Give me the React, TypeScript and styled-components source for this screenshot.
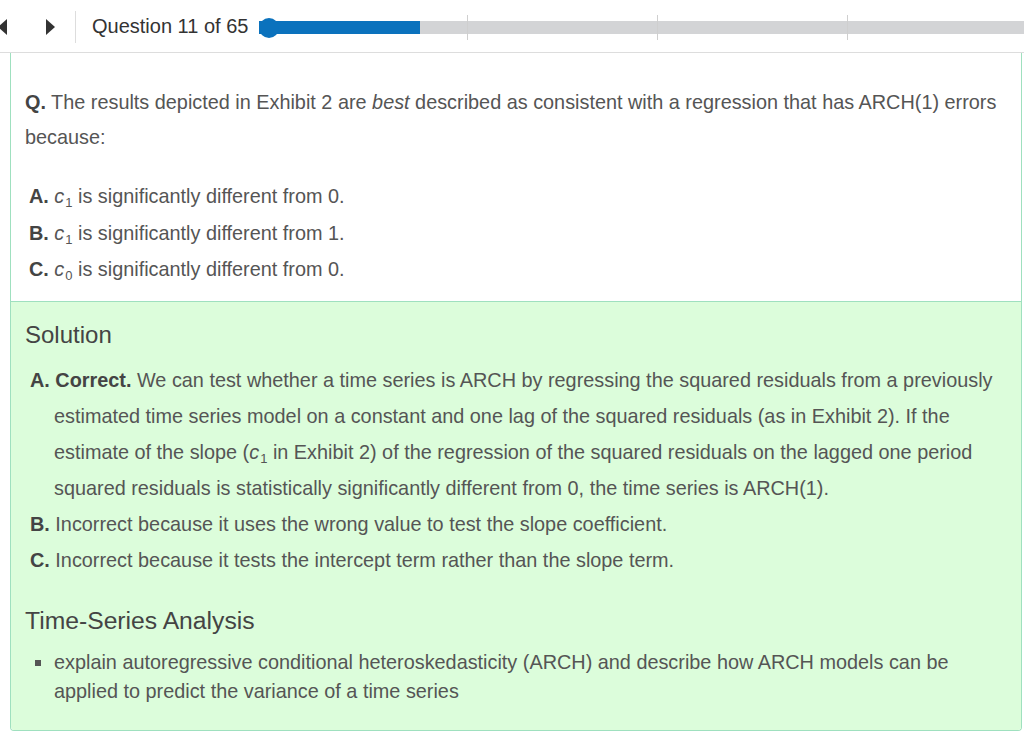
import React from "react";
import styled, { createGlobalStyle } from "styled-components";

const Global = createGlobalStyle`
  html, body { margin: 0; padding: 0; background: #ffffff; }
  body { font-family: "Liberation Sans", Arial, sans-serif; color: #555555; }
  * { box-sizing: border-box; }
`;

const Header = styled.header`
  display: flex;
  align-items: center;
  height: 53px;
  border-bottom: 1px solid #dddddd;
  overflow: hidden;
`;

const Arrow = styled.button<{ $dir: "left" | "right"; $offset: number }>`
  width: 0;
  height: 0;
  padding: 0;
  margin: 1px 0 0 ${(p) => p.$offset}px;
  background: none;
  border-style: solid;
  border-color: transparent;
  border-width: 8.5px 0 8.5px 0;
  ${(p) =>
    p.$dir === "left"
      ? "border-right: 9px solid #333333;"
      : "border-left: 9px solid #333333;"}
  flex: none;
  cursor: pointer;
`;

const Divider = styled.div`
  width: 1px;
  height: 32px;
  background: #dddddd;
  margin: 1px 0 0 20px;
  flex: none;
`;

const Title = styled.div`
  margin-left: 16px;
  font-size: 20px;
  color: #333333;
  white-space: nowrap;
  flex: none;
`;

const Progress = styled.div`
  position: relative;
  flex: 1;
  margin-left: 11px;
  margin-top: 3px;
  height: 24px;
  display: flex;
  align-items: center;
`;

const Track = styled.div`
  flex: 1;
  height: 13px;
  background: #d3d4d6;
  display: flex;
`;

const Fill = styled.div`
  height: 100%;
  background: #0b72bd;
`;

const Thumb = styled.div`
  position: absolute;
  left: 0;
  top: 2px;
  width: 20px;
  height: 20px;
  border-radius: 50%;
  background: #0b72bd;
`;

const Tick = styled.div`
  position: absolute;
  top: -1px;
  width: 1px;
  height: 25px;
  background: #cfcfcf;
`;

const Card = styled.main`
  margin: 0 2px 0 10px;
  border: 1px solid #9fe0bf;
  border-top: none;
  border-radius: 0 0 4px 4px;
  overflow: hidden;
`;

const QuestionSection = styled.section`
  padding: 32px 14px 13px 14px;
  background: #ffffff;
`;

const QuestionText = styled.p`
  margin: 0 0 23px 0;
  font-size: 19.85px;
  line-height: 35px;
  color: #555555;
  b { color: #444444; }
`;

const OptionList = styled.div`
  display: flex;
  flex-direction: column;
  padding-left: 4px;
`;

const Option = styled.div`
  font-size: 19.85px;
  line-height: 36.5px;
  color: #555555;
  b { color: #444444; }
`;

const Var = styled.span`
  font-style: italic;
  sub {
    font-style: normal;
    font-size: 13px;
    vertical-align: -4px;
    line-height: 0;
    margin-left: 1px;
  }
`;

const SolutionSection = styled.section`
  background: #dcfddb;
  border-top: 1px solid #9fe0bf;
  padding: 16px 14px 24px 14px;
`;

const Heading = styled.h2<{ $size?: number; $gap?: number }>`
  margin: ${(p) => p.$gap ?? 0}px 0 0 0;
  font-size: ${(p) => p.$size ?? 24}px;
  font-weight: normal;
  line-height: 34px;
  color: #444444;
`;

const Explanation = styled.div`
  margin: 10px 0 0 5px;
  display: flex;
  flex-direction: column;
`;

const ExplItem = styled.p`
  margin: 0;
  padding-left: 24px;
  text-indent: -24px;
  font-size: 19.85px;
  line-height: 36px;
  color: #555555;
  b { color: #444444; }
`;

const Bullets = styled.ul`
  margin: 10px 0 0 0;
  padding: 0 0 0 29px;
  list-style: none;
`;

const Bullet = styled.li`
  position: relative;
  font-size: 19.85px;
  line-height: 29px;
  color: #555555;
  &::before {
    content: "";
    position: absolute;
    left: -19px;
    top: 12px;
    width: 6px;
    height: 6px;
    background: #555555;
  }
`;

const C = ({ n }: { n: number }) => (
  <Var>
    c<sub>{n}</sub>
  </Var>
);

export default function App() {
  return (
    <>
      <Global />
      <Header>
        <Arrow $dir="left" $offset={-2} aria-label="Previous" />
        <Arrow $dir="right" $offset={39} aria-label="Next" />
        <Divider />
        <Title>Question 11 of 65</Title>
        <Progress>
          <Track>
            <Fill style={{ width: "161px" }} />
          </Track>
          <Thumb />
          <Tick style={{ left: "208px" }} />
          <Tick style={{ left: "398px" }} />
          <Tick style={{ left: "588px" }} />
        </Progress>
      </Header>
      <Card>
        <QuestionSection>
          <QuestionText>
            <b>Q.</b> The results depicted in Exhibit 2 are <i>best</i> described
            as consistent with a regression that has ARCH(1) errors because:
          </QuestionText>
          <OptionList>
            <Option>
              <b>A.</b> <C n={1} /> is significantly different from 0.
            </Option>
            <Option>
              <b>B.</b> <C n={1} /> is significantly different from 1.
            </Option>
            <Option>
              <b>C.</b> <C n={0} /> is significantly different from 0.
            </Option>
          </OptionList>
        </QuestionSection>
        <SolutionSection>
          <Heading>Solution</Heading>
          <Explanation>
            <ExplItem>
              <b>A. Correct.</b> We can test whether a time series is ARCH by
              regressing the squared residuals from a previously estimated time
              series model on a constant and one lag of the squared residuals (as
              in Exhibit 2). If the estimate of the slope (<C n={1} /> in Exhibit
              2) of the regression of the squared residuals on the lagged one
              period squared residuals is statistically significantly different
              from 0, the time series is ARCH(1).
            </ExplItem>
            <ExplItem>
              <b>B.</b> Incorrect because it uses the wrong value to test the
              slope coefficient.
            </ExplItem>
            <ExplItem>
              <b>C.</b> Incorrect because it tests the intercept term rather than
              the slope term.
            </ExplItem>
          </Explanation>
          <Heading $size={24.7} $gap={26}>Time-Series Analysis</Heading>
          <Bullets>
            <Bullet>
              explain autoregressive conditional heteroskedasticity (ARCH) and
              describe how ARCH models can be applied to predict the variance of a
              time series
            </Bullet>
          </Bullets>
        </SolutionSection>
      </Card>
    </>
  );
}
